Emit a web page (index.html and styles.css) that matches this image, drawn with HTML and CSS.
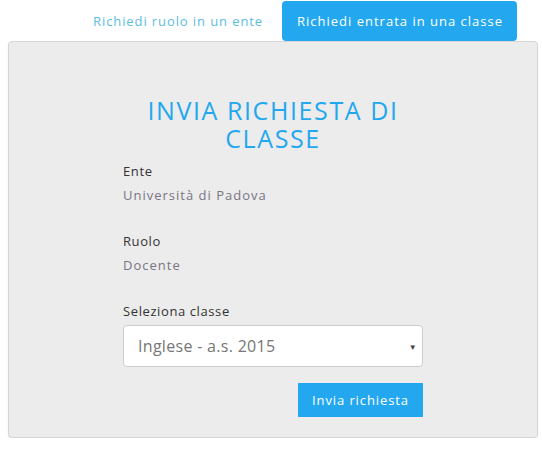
FILE: index.html
```html
<!DOCTYPE html>
<html lang="it">
<head>
<meta charset="utf-8">
<link rel="stylesheet" href="styles.css">
</head>
<body>
<nav class="tabs">
  <a class="tab" href="#">Richiedi ruolo in un ente</a>
  <a class="tab active" href="#">Richiedi entrata in una classe</a>
</nav>
<section class="panel">
  <h1 class="title">INVIA RICHIESTA DI<br>CLASSE</h1>
  <form class="form">
    <div class="field">
      <div class="label">Ente</div>
      <div class="value">Università di Padova</div>
    </div>
    <div class="field">
      <div class="label">Ruolo</div>
      <div class="value">Docente</div>
    </div>
    <div class="field">
      <div class="label">Seleziona classe</div>
      <div class="select">
        <span>Inglese - a.s. 2015</span>
        <span class="arrow">▼</span>
      </div>
    </div>
    <div class="actions">
      <button type="button" class="btn">Invia richiesta</button>
    </div>
  </form>
</section>
</body>
</html>
```
FILE: styles.css
```css
* { box-sizing: border-box; }
body {
  margin: 0;
  padding: 0 4px 0 8px;
  font-family: "Open Sans", "Noto Sans", sans-serif;
  background: #fff;
  color: #333;
}
.tabs {
  display: flex;
  justify-content: flex-end;
  align-items: center;
  gap: 4px;
  padding-right: 21px;
  height: 41px;
  padding-top: 1px;
}
.tab {
  display: block;
  font-size: 13px;
  letter-spacing: 0.9px;
  color: #5bbde0;
  text-decoration: none;
  padding: 0 15px;
  line-height: 40px;
  border-radius: 4px;
}
.active {
  background: #23a8f0;
  color: #fff;
  letter-spacing: 1px;
  padding: 0 14px 0 15px;
}
.panel {
  width: 530px;
  background: #ececec;
  border: 1px solid #d6d6d6;
  border-radius: 4px;
  box-shadow: 0 1px 2px rgba(0,0,0,0.08);
  padding: 54px 0 20px;
  height: 397px;
}
.title {
  margin: 0 0 10px;
  text-align: center;
  color: #23a8f0;
  font-weight: 400;
  font-size: 25px;
  line-height: 28px;
  letter-spacing: 1.6px;
}
.form {
  width: 300px;
  margin: 0 auto 0 114px;
}
.field { margin-bottom: 28px; }
.label {
  font-size: 13px;
  line-height: 18px;
  color: #333;
  margin-bottom: 6px;
  letter-spacing: 0.6px;
}
.value {
  font-size: 13px;
  line-height: 18px;
  color: #7a7585;
  letter-spacing: 1px;
}
.select {
  display: flex;
  justify-content: space-between;
  align-items: center;
  height: 42px;
  background: #fff;
  border: 1px solid #ccc;
  border-radius: 4px;
  padding: 0 5px 0 14px;
  font-size: 16px;
  letter-spacing: 0.3px;
  color: #777;
  margin-top: -1px;
}
.arrow {
  font-size: 8px;
  color: #444;
}
.actions {
  display: flex;
  justify-content: flex-end;
  margin-top: -12px;
}
.btn {
  border: 0;
  background: #23a8f0;
  color: #fff;
  font-family: inherit;
  font-size: 13px;
  letter-spacing: 0.9px;
  height: 34px;
  width: 125px;
  padding: 0;
}
```
